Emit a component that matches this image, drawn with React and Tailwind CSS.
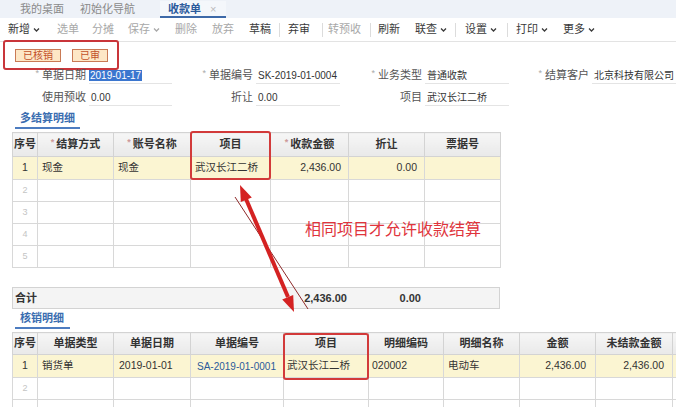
import React from 'react';

const font = "font-['Liberation_Sans','Noto_Sans_CJK_SC',sans-serif]";

const Chevron = () => (
  <svg className="ml-[3px] h-[6px] w-[7px]" viewBox="0 0 7 6">
    <path d="M1 1.5 L3.5 4 L6 1.5" fill="none" stroke="currentColor" strokeWidth="1.3" />
  </svg>
);

const toolbar = [
  { t: '新增', w: 'w-[49px]', on: true, dd: true },
  { t: '选单', w: 'w-[35px]' },
  { t: '分摊', w: 'w-[36px]' },
  { t: '保存', w: 'w-[47px]', dd: true },
  { t: '删除', w: 'w-[37px]' },
  { t: '放弃', w: 'w-[37px]' },
  { t: '草稿', w: 'w-[30px]', on: true },
  { sep: true, w: 'w-[9px]' },
  { t: '弃审', w: 'w-[34px]', on: true },
  { sep: true, w: 'w-[6px]' },
  { t: '转预收', w: 'w-[42px]' },
  { sep: true, w: 'w-[8px]' },
  { t: '刷新', w: 'w-[37px]', on: true },
  { t: '联查', w: 'w-[40px]', on: true, dd: true },
  { sep: true, w: 'w-[10px]' },
  { t: '设置', w: 'w-[42px]', on: true, dd: true },
  { sep: true, w: 'w-[9px]' },
  { t: '打印', w: 'w-[47px]', on: true, dd: true },
  { t: '更多', w: 'w-[50px]', on: true, dd: true },
];

const Field = ({ req, label, value, lw, vw, selected }) => (
  <div className="flex items-center">
    <div className={`${lw} text-right text-[#555] pr-[3px] whitespace-nowrap`}>
      {req && <span className="text-[#aaa] text-[9px] mr-[3px] align-top">*</span>}
      {label}
    </div>
    <div className={`${vw} h-[17px] leading-[17px] border-b border-[#e4e4e4] text-[#333] text-[10px] whitespace-nowrap`}>
      {selected ? (
        <span className="bg-[#3b76cf] text-white px-[1px]">{value}</span>
      ) : (
        <span className="pl-[2px]">{value}</span>
      )}
    </div>
  </div>
);

const SectionTitle = ({ children, w }) => (
  <div className="pl-[15px]">
    <div className={`${w} border-b-2 border-[#4d7cc0] text-[#3a6db0] font-bold text-[11px] h-[20px] leading-[18px] pl-[5px]`}>
      {children}
    </div>
  </div>
);

const Th = ({ w, req, children }) => (
  <th className={`${w} border border-[#d3d3d3] font-bold text-[#333] text-[11px] text-center bg-gradient-to-b from-[#f6f6f6] to-[#e9e9e9]`}>
    {req && <span className="text-[#c99] text-[9px] mr-[2px] align-top">*</span>}
    {children}
  </th>
);

const Td = ({ children, cls = '' }) => (
  <td className={`border border-[#d8d8d8] whitespace-nowrap overflow-hidden ${cls}`}>{children}</td>
);

export default function App() {
  return (
    <div className={`${font} relative w-[676px] h-[407px] overflow-hidden bg-white text-[11px]`}>
      {/* tabs */}
      <div className="h-[18px] bg-[#eef2f8] flex items-end text-[11px] text-[#8a8a8a]">
        <div className="w-[80px] pl-[20px] h-[17px] leading-[16px]">我的桌面</div>
        <div className="w-[80px] h-[17px] leading-[16px]">初始化导航</div>
        <div className="w-[66px] h-[17px] leading-[16px] border-b-2 border-[#3d69a8] bg-[#f4f7fb] flex">
          <span className="pl-[8px] text-[#2b5a9b] font-bold">收款单</span>
          <span className="ml-[9px] text-[#bbb]">×</span>
        </div>
      </div>

      {/* toolbar */}
      <div className="h-[24px] flex items-center pl-[8px] border-b border-[#e3e3e3] bg-white">
        {toolbar.map((b, i) =>
          b.sep ? (
            <div key={i} className={`${b.w} h-[14px] flex items-center`}>
              <div className="h-[14px] w-px bg-[#dcdcdc]" />
            </div>
          ) : (
            <div key={i} className={`${b.w} flex items-center whitespace-nowrap ${b.on ? 'text-[#3a3a3a]' : 'text-[#a8a8a8]'}`}>
              {b.t}
              {b.dd && <Chevron />}
            </div>
          )
        )}
      </div>

      {/* status */}
      <div className="pl-[3px] -mt-[2px]">
        <div className="w-[116px] h-[30px] border-2 border-[#c9353a] rounded-[3px] flex items-center pl-[10px] gap-[11px]">
          <div className="h-[13px] px-[7px] leading-[11px] border border-[#c97a55] bg-[#fde7c6] text-[#c2502a] text-[10px]">已核销</div>
          <div className="h-[13px] px-[7px] leading-[11px] border border-[#c97a55] bg-[#fde7c6] text-[#c2502a] text-[10px]">已审</div>
        </div>
      </div>

      {/* form */}
      <div className="flex mt-[-3px]">
        <Field req label="单据日期" value="2019-01-17" lw="w-[89px]" vw="w-[83px]" selected />
        <Field req label="单据编号" value="SK-2019-01-0004" lw="w-[84px]" vw="w-[84px]" />
        <Field req label="业务类型" value="普通收款" lw="w-[85px]" vw="w-[84px]" />
        <Field req label="结算客户" value="北京科技有限公司" lw="w-[83px]" vw="w-[84px]" />
      </div>
      <div className="flex mt-[5px]">
        <Field label="使用预收" value="0.00" lw="w-[89px]" vw="w-[83px]" />
        <Field label="折让" value="0.00" lw="w-[84px]" vw="w-[84px]" />
        <Field label="项目" value="武汉长江二桥" lw="w-[85px]" vw="w-[84px]" />
      </div>

      <div className="mt-[3px]">
        <SectionTitle w="w-[65px]">多结算明细</SectionTitle>
      </div>

      {/* table 1 */}
      <div className="pl-[12px] mt-[3px]">
        <table className="border-collapse table-fixed w-[488px] text-[10.5px]">
          <thead>
            <tr className="h-[24px]">
              <Th w="w-[25px]">序号</Th>
              <Th w="w-[76px]" req>结算方式</Th>
              <Th w="w-[77px]" req>账号名称</Th>
              <Th w="w-[80px]">项目</Th>
              <Th w="w-[78px]" req>收款金额</Th>
              <Th w="w-[76px]">折让</Th>
              <Th w="w-[76px]">票据号</Th>
            </tr>
          </thead>
          <tbody>
            <tr className="h-[23px] bg-[#fbf5d2] text-[#333]">
              <Td cls="text-center">1</Td>
              <Td cls="pl-[4px]">现金</Td>
              <Td cls="pl-[4px]">现金</Td>
              <Td cls="pl-[4px]">武汉长江二桥</Td>
              <Td cls="text-right pr-[7px]">2,436.00</Td>
              <Td cls="text-right pr-[7px]">0.00</Td>
              <Td />
            </tr>
            {[2, 3, 4, 5].map((n) => (
              <tr key={n} className="h-[22px]">
                <Td cls="text-center text-[#c4c4c4] text-[9px]">{n}</Td>
                <Td /><Td /><Td /><Td /><Td /><Td />
              </tr>
            ))}
          </tbody>
        </table>
      </div>

      {/* total */}
      <div className="pl-[12px] mt-[19px]">
        <div className="w-[488px] h-[22px] flex items-center bg-[#f4f4f4] border border-[#d3d3d3] font-bold text-[#333]">
          <div className="w-[257px] pl-[2px]">合计</div>
          <div className="w-[78px] text-right pr-[1px]">2,436.00</div>
          <div className="w-[76px] text-right pr-[3px]">0.00</div>
        </div>
      </div>

      <div>
        <SectionTitle w="w-[55px]">核销明细</SectionTitle>
      </div>

      {/* table 2 */}
      <div className="pl-[12px] mt-[3px]">
        <table className="border-collapse table-fixed w-[760px] text-[10.5px]">
          <thead>
            <tr className="h-[22px]">
              <Th w="w-[25px]">序号</Th>
              <Th w="w-[76px]">单据类型</Th>
              <Th w="w-[77px]">单据日期</Th>
              <Th w="w-[93px]">单据编号</Th>
              <Th w="w-[85px]">项目</Th>
              <Th w="w-[75px]">明细编码</Th>
              <Th w="w-[76px]">明细名称</Th>
              <Th w="w-[76px]">金额</Th>
              <Th w="w-[77px]">未结款金额</Th>
              <Th w="w-[100px]"></Th>
            </tr>
          </thead>
          <tbody>
            <tr className="h-[23px] bg-[#fbf5d2] text-[#333]">
              <Td cls="text-center">1</Td>
              <Td cls="pl-[4px]">销货单</Td>
              <Td cls="pl-[5px]">2019-01-01</Td>
              <Td cls="pl-[6px] text-[10px] text-[#2b5a9b]">SA-2019-01-0001</Td>
              <Td cls="pl-[3px]">武汉长江二桥</Td>
              <Td cls="pl-[3px]">020002</Td>
              <Td cls="pl-[4px]">电动车</Td>
              <Td cls="text-right pr-[9px]">2,436.00</Td>
              <Td cls="text-right pr-[8px]">2,436.00</Td>
              <Td />
            </tr>
            <tr className="h-[22px]">
              <Td cls="text-center text-[#c4c4c4] text-[9px]">2</Td>
              <Td /><Td /><Td /><Td /><Td /><Td /><Td /><Td /><Td />
            </tr>
            <tr className="h-[22px]">
              <Td /><Td /><Td /><Td /><Td /><Td /><Td /><Td /><Td /><Td />
            </tr>
          </tbody>
        </table>
      </div>

      {/* annotations */}
      <div className="absolute left-[190px] top-[131px] w-[81px] h-[49px] border-2 border-[#d23a3a] rounded-[3px] pointer-events-none" />
      <div className="absolute left-[283px] top-[333px] w-[86px] h-[47px] border-2 border-[#d23a3a] rounded-[3px] pointer-events-none" />
      <div className="absolute left-[305px] top-[217px] text-[16px] leading-[22px] text-[#e0343c] whitespace-nowrap pointer-events-none font-['Noto_Sans_CJK_SC',sans-serif]">
        相同项目才允许收款结算
      </div>
      <svg className="absolute left-0 top-0 pointer-events-none" width="676" height="407" viewBox="0 0 676 407">
        <line x1="235" y1="197" x2="308" y2="309" stroke="#8e2a2a" strokeWidth="1" />
        <line x1="246" y1="199" x2="288" y2="297" stroke="#d42222" strokeWidth="4" />
        <polygon points="240,185 251.8,197.4 240.8,202" fill="#d42222" />
        <polygon points="294,312 293.2,295 282.2,299.6" fill="#d42222" />
      </svg>
    </div>
  );
}
